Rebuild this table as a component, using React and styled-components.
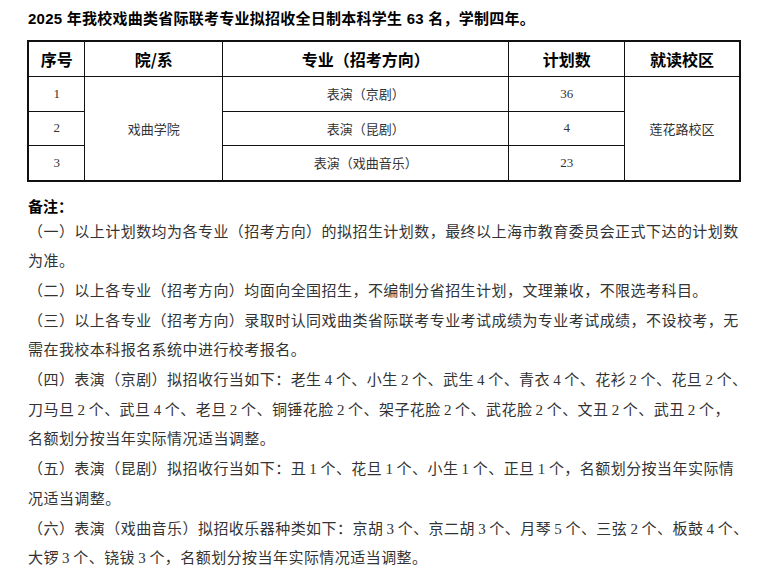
import styled, { createGlobalStyle } from 'styled-components'

const GlobalStyle = createGlobalStyle`
  body {
    margin: 0;
    background: #fff;
  }
`

const Page = styled.div`
  width: 765px;
  padding: 8px 0 0 27px;
  box-sizing: border-box;
  font-family: "Liberation Serif", "Noto Sans CJK SC", sans-serif;
  color: #2b2b2b;
`

const Title = styled.h1`
  margin: 0 0 10px 1px;
  font-family: "Liberation Sans", "Noto Sans CJK SC", sans-serif;
  font-size: 15px;
  line-height: 22px;
  font-weight: 700;
  letter-spacing: 0.25px;
  color: #000;
`

const Table = styled.table`
  width: 714px;
  box-sizing: border-box;
  border-collapse: collapse;
  table-layout: fixed;
  border: 2px solid #111;
`

const HeadCell = styled.th`
  width: ${({ $w }) => $w}%;
  height: 34px;
  padding: 0;
  border: 1px solid #111;
  font-family: "Noto Sans CJK SC", sans-serif;
  font-size: 16px;
  font-weight: 700;
  color: #000;
  text-align: center;
`

const Cell = styled.td`
  height: 33.5px;
  padding: 0;
  border: 1px solid #111;
  font-family: ${({ $num }) => ($num ? '"Liberation Serif", serif' : '"Noto Sans CJK SC", sans-serif')};
  font-size: 13px;
  color: #333;
  text-align: center;
`

const NotesTitle = styled.h2`
  margin: 13px 0 0 1px;
  font-family: "Noto Sans CJK SC", sans-serif;
  font-size: 15px;
  line-height: 22px;
  font-weight: 700;
  color: #000;
`

const Notes = styled.div`
  margin-top: 1px;
  padding-left: 1px;
`

const Note = styled.p`
  margin: 0;
  font-size: 15px;
  letter-spacing: 0.45px;
  word-spacing: -1px;
  line-height: 29.7px;
  white-space: nowrap;
  color: #333;
`

const columns = [
  ['序号', 56],
  ['院/系', 138],
  ['专业（招考方向）', 288],
  ['计划数', 116],
  ['就读校区', 115],
]

const rows = [
  ['1', '表演（京剧）', '36'],
  ['2', '表演（昆剧）', '4'],
  ['3', '表演（戏曲音乐）', '23'],
]

const notes = [
  ['（一）以上计划数均为各专业（招考方向）的拟招生计划数，最终以上海市教育委员会正式下达的计划数', '为准。'],
  ['（二）以上各专业（招考方向）均面向全国招生，不编制分省招生计划，文理兼收，不限选考科目。'],
  ['（三）以上各专业（招考方向）录取时认同戏曲类省际联考专业考试成绩为专业考试成绩，不设校考，无', '需在我校本科报名系统中进行校考报名。'],
  [
    '（四）表演（京剧）拟招收行当如下：老生 4 个、小生 2 个、武生 4 个、青衣 4 个、花衫 2 个、花旦 2 个、',
    '刀马旦 2 个、武旦 4 个、老旦 2 个、铜锤花脸 2 个、架子花脸 2 个、武花脸 2 个、文丑 2 个、武丑 2 个，',
    '名额划分按当年实际情况适当调整。',
  ],
  ['（五）表演（昆剧）拟招收行当如下：丑 1 个、花旦 1 个、小生 1 个、正旦 1 个，名额划分按当年实际情', '况适当调整。'],
  ['（六）表演（戏曲音乐）拟招收乐器种类如下：京胡 3 个、京二胡 3 个、月琴 5 个、三弦 2 个、板鼓 4 个、', '大锣 3 个、铙钹 3 个，名额划分按当年实际情况适当调整。'],
]

const total = columns.reduce((sum, [, w]) => sum + w, 0)

const App = () => {
  return (
    <Page>
      <GlobalStyle />
      <Title>2025 年我校戏曲类省际联考专业拟招收全日制本科学生 63 名，学制四年。</Title>
      <Table>
        <thead>
          <tr>
            {columns.map(([label, w]) => (
              <HeadCell key={label} $w={(w / total) * 100}>{label}</HeadCell>
            ))}
          </tr>
        </thead>
        <tbody>
          {rows.map(([no, major, count], i) => (
            <tr key={no}>
              <Cell $num>{no}</Cell>
              {i === 0 && <Cell rowSpan={3}>戏曲学院</Cell>}
              <Cell>{major}</Cell>
              <Cell $num>{count}</Cell>
              {i === 0 && <Cell rowSpan={3}>莲花路校区</Cell>}
            </tr>
          ))}
        </tbody>
      </Table>
      <NotesTitle>备注：</NotesTitle>
      <Notes>
        {notes.map((lines) => (
          <Note key={lines[0]}>
            {lines.map((line, i) => (
              <span key={i}>
                {i > 0 && <br />}
                {line}
              </span>
            ))}
          </Note>
        ))}
      </Notes>
    </Page>
  )
}

export default App
